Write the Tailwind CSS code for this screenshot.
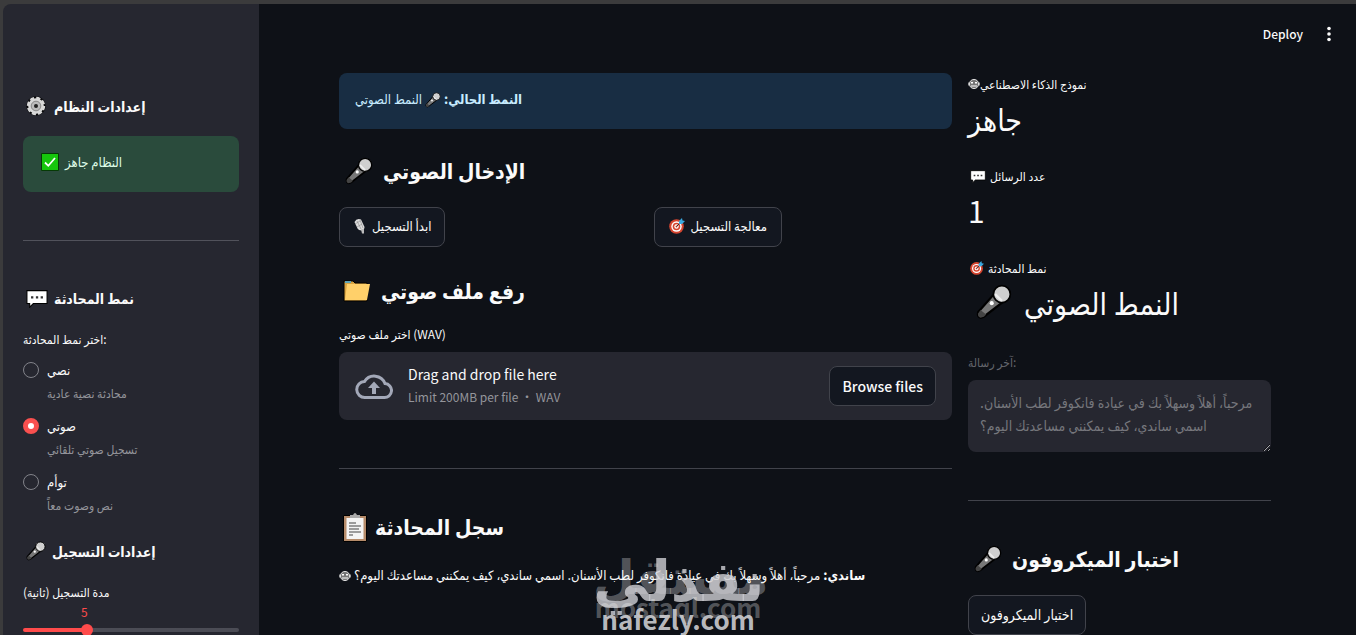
<!DOCTYPE html>
<html lang="ar" dir="ltr">
<head>
    <meta charset="UTF-8">
    <meta name="viewport" content="width=device-width, initial-scale=1.0">
    <title>ساندي</title>
    <script src="https://cdn.jsdelivr.net/npm/@tailwindcss/browser@4"></script>
</head>
<body class="h-screen overflow-hidden bg-[#3b3b3c] pt-1 pl-[3px] font-['Noto_Sans_CJK_SC','DejaVu_Sans_Condensed','DejaVu_Sans',sans-serif] text-[#fafafa]">

    <!-- icons -->
    <svg class="hidden">
        <symbol id="mic" viewBox="0 0 32 32">
            <path d="M16 9L2 25q-1 4 2 5l3-1L24 16z" fill="#777" stroke="#000" stroke-width="2"/>
            <path d="M4 23l-2 3q-1 3 2 4l3-1 2-2z" fill="#444"/>
            <circle cx="23" cy="9" r="7.500" fill="#cfcfcf" stroke="#000" stroke-width="1.500"/>
            <path d="M17 9l6 6" stroke="#eee" stroke-width="2"/>
            <circle cx="14" cy="17" r="1.800" fill="#fff"/>
        </symbol>
        <symbol id="studio" viewBox="0 0 16 16">
            <path d="M2.500 4q2-4 6.500-2.500l3.500 7.500q0 3-3 3.500-3 0-4-2z" fill="#ddd"/>
            <path d="M5 3l4 8M8 2l3 8M3 6l5-3M5 9l5-3" stroke="#888" stroke-width=".6"/>
            <path d="M9 11.500l3-1v5h-2z" fill="#bbb"/>
        </symbol>
        <symbol id="target" viewBox="0 0 16 16">
            <circle cx="7.500" cy="8.500" r="7.300" fill="#d6452f"/>
            <circle cx="7.500" cy="8.500" r="5.200" fill="#fff"/>
            <circle cx="7.500" cy="8.500" r="3.800" fill="#d6452f"/>
            <circle cx="7.500" cy="8.500" r="2.200" fill="#fff"/>
            <circle cx="7.500" cy="8.500" r="1" fill="#d6452f"/>
            <path d="M7.500 8.500L12 4" stroke="#333"/>
            <path d="M10 6V3l3-3 .5 2.500L16 3l-3 3z" fill="#39a9e0"/>
        </symbol>
        <symbol id="chat" viewBox="0 0 24 20">
            <path d="M1 2h22v14H8l-4 4v-4H1z" fill="#fff" stroke="#000" stroke-width="1.200"/>
            <path d="M5.500 8H8v2.500H5.500zM10.800 8h2.500v2.500h-2.500zM16 8h2.500v2.500H16z" fill="#333"/>
        </symbol>
        <symbol id="folder" viewBox="0 0 28 22">
            <path d="M1 1h9l2 2h12v18H1z" fill="#d9a441" stroke="#000"/>
            <path d="M2 1h6v2H2z" fill="#5fa3b5"/>
            <path d="M4 4h23l-3 16H2z" fill="#ffd06a"/>
        </symbol>
        <symbol id="clipboard" viewBox="0 0 24 30">
            <path d="M.5 3.500h23v26H.5z" fill="#b58b6a" stroke="#000"/>
            <path d="M3.500 6h17v21h-17z" fill="#f4f4f4"/>
            <path d="M7 6V3h3q2-4 4 0h3v3z" fill="#aaa"/>
            <path d="M6 11h7M6 14h12M6 17h10M6 20h12M6 23h4" stroke="#444" stroke-width="1.200"/>
        </symbol>
        <symbol id="gear" viewBox="0 0 20 20">
            <circle cx="10" cy="10" r="9.700" fill="#08080a"/>
            <circle cx="10" cy="10" r="7.800" fill="#d8d8d8" stroke="#d8d8d8" stroke-width="2.800" stroke-dasharray="4 2.126"/>
            <circle cx="10" cy="10" r="4.800" fill="#bbb" stroke="#888"/>
            <circle cx="10" cy="10" r="2" fill="#222"/>
        </symbol>
        <symbol id="check" viewBox="0 0 18 18">
            <path d="M.5.5h17v17H.5z" fill="#16c60c" stroke="#063a06"/>
            <path d="M4 9.500l3.300 3.300L14 5" fill="none" stroke="#fff" stroke-width="1.800"/>
        </symbol>
        <symbol id="robot" viewBox="0 0 12 12">
            <circle cx="6" cy="6" r="4.600" fill="#777" stroke="#ddd"/>
            <path d="M.8 4.500v3M11.200 4.500v3" stroke="#ddd"/>
            <path d="M3 4h2v1.500H3zM7 4h2v1.500H7zM3 7.500h6v1H3z" fill="#fff"/>
        </symbol>
    </svg>

    <div class="flex h-full">
        <aside class="w-64 shrink-0 overflow-hidden rounded-tl-lg bg-[#262730] px-5 pt-[88px]">
            <h2 class="flex h-7 items-center gap-2 pl-[3px] text-sm font-bold">
                <svg class="size-5"><use href="#gear"/></svg> إعدادات النظام
            </h2>
            <div class="mt-4 flex h-14 items-center gap-1.5 rounded-lg bg-[#2a4b3c] px-[18px] pb-1 text-[13px] text-[#dffde9]">
                <svg class="size-[18px]"><use href="#check"/></svg> النظام جاهز
            </div>
            <hr class="mt-12 border-[#51525b]">
            <h2 class="mt-[43px] flex h-7 items-center gap-1.5 pl-[3px] text-sm font-bold">
                <svg class="h-5 w-[22px]"><use href="#chat"/></svg> نمط المحادثة
            </h2>
            <fieldset class="mt-[15px]">
                <legend class="mb-2 text-xs leading-6">اختر نمط المحادثة:</legend>
                <div class="flex flex-col gap-2.5">
                    <label class="grid grid-cols-[24px_1fr] items-center">
                        <input type="radio" name="mode" class="size-4 appearance-none rounded-full border border-[#82838a]">
                        <span class="text-[13px] leading-[22px]">نصي</span>
                        <span class="col-start-2 text-xs leading-6 text-[#94959b]">محادثة نصية عادية</span>
                    </label>
                    <label class="grid grid-cols-[24px_1fr] items-center">
                        <input type="radio" name="mode" checked class="size-4 appearance-none rounded-full border-[5px] border-[#f9504f] bg-white">
                        <span class="text-[13px] leading-[22px]">صوتي</span>
                        <span class="col-start-2 text-xs leading-6 text-[#94959b]">تسجيل صوتي تلقائي</span>
                    </label>
                    <label class="grid grid-cols-[24px_1fr] items-center">
                        <input type="radio" name="mode" class="size-4 appearance-none rounded-full border border-[#82838a]">
                        <span class="text-[13px] leading-[22px]">توأم</span>
                        <span class="col-start-2 text-xs leading-6 text-[#94959b]">نص وصوت معاً</span>
                    </label>
                </div>
            </fieldset>
            <h2 class="mt-5 flex h-7 items-center gap-1.5 pl-[3px] text-sm font-bold">
                <svg class="size-5"><use href="#mic"/></svg> إعدادات التسجيل
            </h2>
            <label for="duration" class="mt-4 block text-xs leading-[22px]">مدة التسجيل (ثانية)</label>
            <output for="duration" class="block pl-[58px] text-xs leading-[18px] text-[#ff4b4b]">5</output>
            <input id="duration" type="range" min="3" max="10" value="5"
                class="mt-[7px] block h-1 w-full appearance-none rounded-full bg-linear-to-r from-[#ff4b4b] from-[29%] to-[#4b4c55] to-[29%] [&::-webkit-slider-thumb]:size-3 [&::-webkit-slider-thumb]:appearance-none [&::-webkit-slider-thumb]:rounded-full [&::-webkit-slider-thumb]:bg-[#ff4b4b]">
        </aside>

        <main class="relative min-w-0 flex-1 overflow-hidden bg-[#0e1117]">
            <header class="absolute top-0 right-[17px] flex h-[60px] items-center gap-4 text-xs font-medium">
                <button>Deploy</button>
                <button aria-label="Menu">
                    <svg class="h-4 w-5" viewBox="0 0 20 16" fill="currentColor"><circle cx="10" cy="2.500" r="1.800"/><circle cx="10" cy="8" r="1.800"/><circle cx="10" cy="13.500" r="1.800"/></svg>
                </button>
            </header>

            <div class="grid grid-cols-[613fr_303fr] gap-4 pt-[69px] pr-[85px] pl-20">
                <section class="min-w-0">
                    <div class="h-14 rounded-lg bg-[#182d43] px-4 text-[13px] leading-[52px] text-[#c7ebff]">
                        <strong>النمط الحالي:</strong> <svg class="inline size-4"><use href="#mic"/></svg> النمط الصوتي
                    </div>
                    <h1 class="mt-6 flex h-9 items-center gap-2.5 pl-1.5 text-[21px] font-bold">
                        <svg class="size-7"><use href="#mic"/></svg> الإدخال الصوتي
                    </h1>
                    <div class="mt-[18px] grid grid-cols-2 gap-4 text-[13px]">
                        <div>
                            <button class="flex h-10 items-center gap-1 rounded-lg border border-[#41434b] bg-[#131720] px-3 pb-0.5">
                                <svg class="size-4"><use href="#studio"/></svg> ابدأ التسجيل
                            </button>
                        </div>
                        <div>
                            <button class="flex h-10 items-center gap-1.5 rounded-lg border border-[#41434b] bg-[#131720] px-3.5 pb-0.5">
                                <svg class="size-4"><use href="#target"/></svg> معالجة التسجيل
                            </button>
                        </div>
                    </div>
                    <h1 class="mt-[26px] flex h-9 items-center gap-2.5 pl-1 text-[21px] font-bold">
                        <svg class="h-[22px] w-7"><use href="#folder"/></svg> رفع ملف صوتي
                    </h1>
                    <p class="mt-[15px] text-xs leading-5">اختر ملف صوتي (WAV)</p>
                    <div class="mt-2 flex h-[68px] items-center rounded-lg bg-[#262730] px-4">
                        <svg class="h-7 w-[38px] text-[#a3a8b8]" viewBox="0 0 38 28" fill="none" stroke="currentColor" stroke-width="3">
                            <path d="M10 25.500h19a7 7 0 0 0 1-14A11.500 11.500 0 0 0 9.500 9.500a8 8 0 0 0 .5 16z"/>
                            <path d="M19 22v-6" stroke-width="4"/><path d="M13 16l6-6.500 6 6.500z" fill="currentColor" stroke="none"/>
                        </svg>
                        <div class="ml-[15px] flex-1 pb-0.5">
                            <p class="text-sm leading-6">Drag and drop file here</p>
                            <p class="text-xs leading-[22px] text-[#94959b]">Limit 200MB per file • WAV</p>
                        </div>
                        <button class="h-10 rounded-lg border border-[#41434b] bg-[#131720] px-3 text-sm font-medium">Browse files</button>
                    </div>
                    <hr class="mt-12 border-[#41434b]">
                    <h1 class="mt-10 flex h-9 items-center gap-2 pl-1 text-[21px] font-bold">
                        <svg class="h-[30px] w-6"><use href="#clipboard"/></svg> سجل المحادثة
                    </h1>
                    <p class="mt-[18px] text-[13px] leading-6 whitespace-nowrap"><svg class="inline size-3"><use href="#robot"/></svg> <strong>ساندي:</strong> مرحباً، أهلاً وسهلاً بك في عيادة فانكوفر لطب الأسنان. اسمي ساندي، كيف يمكنني مساعدتك اليوم؟</p>
                </section>

                <section class="min-w-0 pt-px">
                    <div class="flex flex-col gap-6">
                        <div>
                            <p class="flex h-5 items-center text-xs"><svg class="size-3"><use href="#robot"/></svg>نموذج الذكاء الاصطناعي</p>
                            <p class="text-3xl leading-[48px]">جاهز</p>
                        </div>
                        <div>
                            <p class="flex h-5 items-center gap-1 pl-0.5 text-xs"><svg class="h-3.5 w-4"><use href="#chat"/></svg>عدد الرسائل</p>
                            <p class="text-3xl leading-[48px]">1</p>
                        </div>
                        <div>
                            <p class="flex h-5 items-center gap-1 pl-0.5 text-xs"><svg class="size-3.5"><use href="#target"/></svg>نمط المحادثة</p>
                            <p class="flex h-12 items-center gap-3 pl-2 text-3xl"><svg class="size-9"><use href="#mic"/></svg>النمط الصوتي</p>
                        </div>
                    </div>
                    <label for="last" class="mt-[26px] block text-xs leading-5 text-[#64666d]">آخر رسالة:</label>
                    <textarea id="last" class="mt-2 block h-[72px] w-full overflow-hidden rounded-lg bg-[#262730] px-3 py-[11px] text-sm leading-[23px] text-[#76777d]" disabled>مرحباً، أهلاً وسهلاً بك في عيادة فانكوفر لطب الأسنان. اسمي ساندي، كيف يمكنني مساعدتك اليوم؟</textarea>
                    <hr class="mt-12 border-[#41434b]">
                    <h1 class="mt-10 flex h-9 items-center gap-2.5 pl-1.5 text-[21px] font-bold">
                        <svg class="size-7"><use href="#mic"/></svg> اختبار الميكروفون
                    </h1>
                    <button class="mt-[18px] h-10 rounded-lg border border-[#41434b] bg-[#131720] px-3 pb-0.5 text-sm">اختبار الميكروفون</button>
                </section>
            </div>

            <!-- watermark -->
            <div class="pointer-events-none absolute bottom-0 left-[334px] w-[170px] text-center font-['Noto_Sans_CJK_SC','DejaVu_Sans',sans-serif] font-bold whitespace-nowrap">
                <p class="absolute inset-x-0 bottom-[30px] text-5xl leading-[64px] text-white/30">مستقل</p>
                <p class="absolute inset-x-0 bottom-[26px] text-[56px] leading-[64px] text-[#d0d0d4]/80">نفذلي</p>
                <p class="absolute inset-x-0 bottom-[12px] text-[26px] leading-8 text-white/30">mostaql.com</p>
                <p class="absolute inset-x-0 bottom-0 text-[26px] leading-8 text-[#d0d0d4]/90">nafezly.com</p>
            </div>
        </main>
    </div>
</body>
</html>
